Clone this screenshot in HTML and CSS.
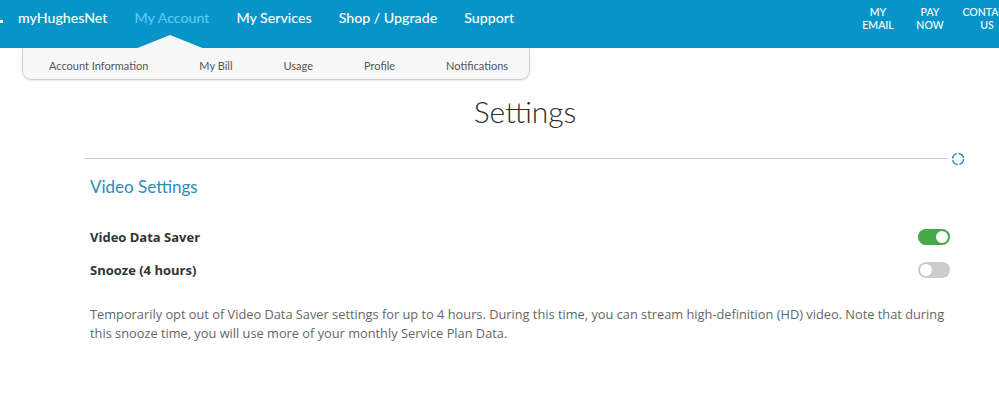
FILE: index.html
```
<!DOCTYPE html>
<html lang="en">
<head>
  <meta charset="UTF-8">
  <meta name="viewport" content="width=device-width, initial-scale=1.0">
  <title>Settings - myHughesNet</title>
  <link rel="stylesheet" href="styles.css">
</head>
<body>
  <header class="site-header">
    <div class="topbar">
      <span class="logo-dot"></span>
      <nav class="main-nav">
        <a href="#" class="brand">myHughesNet</a>
        <a href="#" class="active">My Account</a>
        <a href="#">My Services</a>
        <a href="#">Shop / Upgrade</a>
        <a href="#">Support</a>
      </nav>
      <nav class="quick-nav">
        <a href="#">MY<br>EMAIL</a>
        <a href="#">PAY<br>NOW</a>
        <a href="#" class="contact">CONTACT<br>US</a>
      </nav>
      <span class="notch"></span>
    </div>
    <nav class="sub-nav">
      <a href="#">Account Information</a>
      <a href="#">My Bill</a>
      <a href="#">Usage</a>
      <a href="#">Profile</a>
      <a href="#">Notifications</a>
    </nav>
  </header>

  <main class="content">
    <h1 class="page-title">Settings</h1>
    <div class="divider">
      <svg class="spinner" width="14" height="14" viewBox="0 0 14 14">
        <circle cx="7" cy="7" r="5.5" fill="none" stroke="#2b8bb3" stroke-width="1.4" stroke-dasharray="7 1.6" />
      </svg>
    </div>

    <section class="settings-group">
      <h2>Video Settings</h2>
      <div class="setting-row">
        <span class="label">Video Data Saver</span>
        <span class="toggle on"></span>
      </div>
      <div class="setting-row">
        <span class="label">Snooze (4 hours)</span>
        <span class="toggle"></span>
      </div>
      <p class="note">Temporarily opt out of Video Data Saver settings for up to 4 hours. During this time, you can stream high-definition (HD) video. Note that during this snooze time, you will use more of your monthly Service Plan Data.</p>
    </section>
  </main>
</body>
</html>
```

FILE: styles.css
```
html, body {
  overflow: hidden;
}
body {
  margin: 0;
  font-family: "Open Sans", sans-serif;
  background: #fff;
  color: #333;
}
a {
  text-decoration: none;
  color: inherit;
}

/* header */
.topbar {
  position: relative;
  display: flex;
  align-items: flex-start;
  width: 1030px;
  height: 48px;
  background-color: #0795c9;
}
.logo-dot {
  position: absolute;
  left: 0;
  top: 20px;
  width: 3px;
  height: 3px;
  background: #fff;
}
.main-nav {
  display: flex;
  gap: 27px;
  margin-left: 18px;
  padding-top: 9px;
  font-family: Lato, sans-serif;
  font-size: 14.2px;
  font-weight: 500;
  white-space: nowrap;
}
.main-nav a {
  color: #fff;
  line-height: 18px;
}
.main-nav a.active {
  color: #5ccaf4;
}
.quick-nav {
  position: absolute;
  left: 852px;
  top: 6px;
  display: flex;
  font-family: Lato, sans-serif;
  font-size: 10.5px;
  font-weight: 500;
  line-height: 13px;
  white-space: nowrap;
}
.quick-nav a {
  width: 52px;
  color: #fff;
  text-align: center;
}
.quick-nav a.contact {
  width: 62px;
}
.notch {
  position: absolute;
  left: 135px;
  top: 35px;
  width: 70px;
  height: 14px;
  background: #f7f7f7;
  clip-path: polygon(50% 0, 100% 100%, 0 100%);
}

.sub-nav {
  display: flex;
  gap: 51px;
  width: 480px;
  height: 28px;
  margin-left: 22px;
  padding: 3px 0 0 26px;
  align-items: center;
  background: #f7f7f7;
  border: 1px solid #cfcfcf;
  border-top: none;
  border-radius: 0 0 9px 9px;
  box-shadow: 0 1px 2px rgba(0, 0, 0, 0.08);
  font-family: Lato, sans-serif;
  font-size: 11px;
  color: #555;
}

/* content */
.content {
  padding-left: 84px;
  width: 866px;
}
.page-title {
  margin: 13px 0 0;
  padding-left: 16px;
  text-align: center;
  font-family: Lato, sans-serif;
  font-weight: 300;
  font-size: 30px;
  line-height: 36px;
  color: #2d2d2d;
}
.divider {
  position: relative;
  margin-top: 29px;
  width: 864px;
  height: 1px;
  background: #cdcdcd;
}
.spinner {
  position: absolute;
  left: 867px;
  top: -6px;
}
.settings-group {
  padding-left: 6px;
}
.settings-group h2 {
  margin: 16px 0 0;
  font-family: Lato, sans-serif;
  font-weight: 400;
  font-size: 17px;
  line-height: 24px;
  color: #2e8cb7;
}
.setting-row {
  display: flex;
  justify-content: space-between;
  align-items: center;
  height: 20px;
  margin-top: 28px;
}
.setting-row + .setting-row {
  margin-top: 13px;
}
.label {
  font-size: 13px;
  font-weight: 700;
  color: #333;
}
.toggle {
  position: relative;
  width: 32px;
  height: 16px;
  border-radius: 8px;
  background: #cccccc;
}
.toggle::after {
  content: "";
  position: absolute;
  top: 2px;
  left: 2px;
  width: 12px;
  height: 12px;
  border-radius: 50%;
  background: #fff;
}
.toggle.on {
  background: #45a949;
}
.toggle.on::after {
  left: 18px;
}
.note {
  margin: 25px 0 0;
  font-size: 12.8px;
  line-height: 19px;
  color: #666;
}
```
